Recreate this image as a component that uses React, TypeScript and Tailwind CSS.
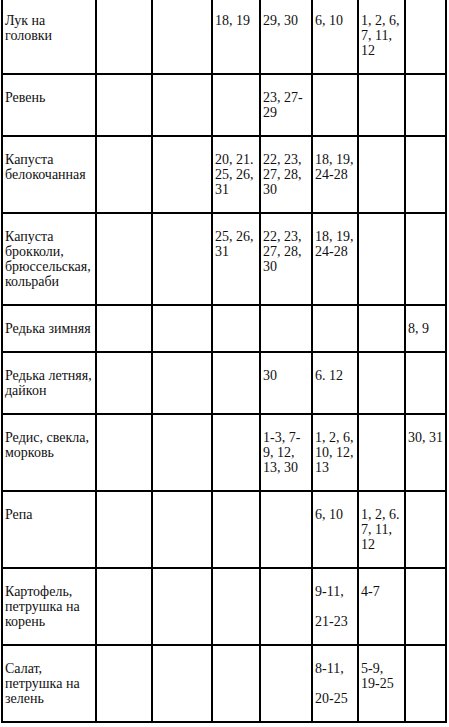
import React from "react";

type Cell = string[];

const rows: Cell[][] = [
  [["Лук на", "головки"], [], [], ["18, 19"], ["29, 30"], ["6, 10"], ["1, 2, 6,", "7, 11,", "12"], []],
  [["Ревень"], [], [], [], ["23, 27-", "29"], [], [], []],
  [["Капуста", "белокочанная"], [], [], ["20, 21.", "25, 26,", "31"], ["22, 23,", "27, 28,", "30"], ["18, 19,", "24-28"], [], []],
  [["Капуста", "брокколи,", "брюссельская,", "кольраби"], [], [], ["25, 26,", "31"], ["22, 23,", "27, 28,", "30"], ["18, 19,", "24-28"], [], []],
  [["Редька зимняя"], [], [], [], [], [], [], ["8, 9"]],
  [["Редька летняя,", "дайкон"], [], [], [], ["30"], ["6. 12"], [], []],
  [["Редис, свекла,", "морковь"], [], [], [], ["1-3, 7-", "9, 12,", "13, 30"], ["1, 2, 6,", "10, 12,", "13"], [], ["30, 31"]],
  [["Репа"], [], [], [], [], ["6, 10"], ["1, 2, 6.", "7, 11,", "12"], []],
  [["Картофель,", "петрушка на", "корень"], [], [], [], [], ["9-11,", "", "21-23"], ["4-7"], []],
  [["Салат,", "петрушка на", "зелень"], [], [], [], [], ["8-11,", "", "20-25"], ["5-9,", "19-25"], []],
];

export default function App() {
  return (
    <div className="min-h-screen w-full overflow-hidden bg-white font-['Liberation_Serif','Times_New_Roman',serif] text-[#111]">
      <div className="ml-[1px] mt-[-4px] grid w-max grid-cols-[94px_56px_60px_48px_52px_46px_47px_41px] border-l-2 border-t-2 border-black text-[14px] leading-[15px]">
        {rows.map((row, ri) =>
          row.map((cell, ci) => (
            <div
              key={`${ri}-${ci}`}
              className="border-b-2 border-r-2 border-black pb-[15px] pl-[2px] pt-[15px]"
            >
              {cell.map((line, li) => (
                <div key={li} className="h-[15px] whitespace-nowrap">
                  {line === "" ? "\u00a0" : line}
                </div>
              ))}
            </div>
          ))
        )}
      </div>
    </div>
  );
}
